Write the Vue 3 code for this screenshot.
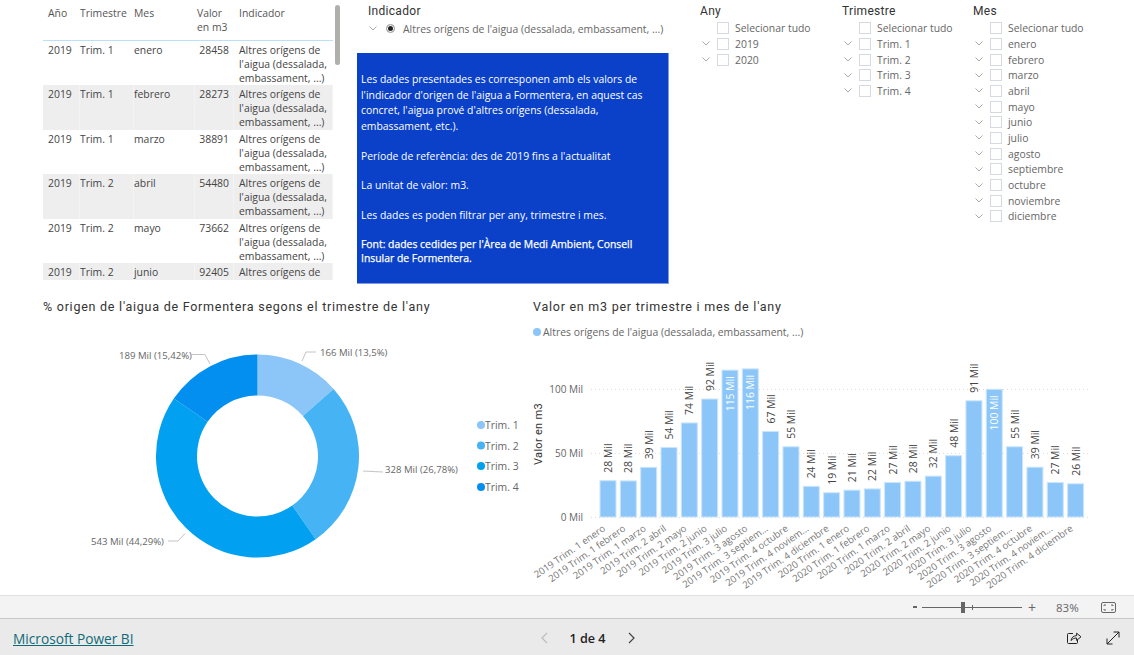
<script setup>
const rowsData = [
  ['2019', 'Trim. 1', 'enero', 28458],
  ['2019', 'Trim. 1', 'febrero', 28273],
  ['2019', 'Trim. 1', 'marzo', 38891],
  ['2019', 'Trim. 2', 'abril', 54480],
  ['2019', 'Trim. 2', 'mayo', 73662],
  ['2019', 'Trim. 2', 'junio', 92405]
]

const slicers = [
  { title: 'Any', cls: 'any', items: ['2019', '2020'] },
  { title: 'Trimestre', cls: 'tri', items: ['Trim. 1', 'Trim. 2', 'Trim. 3', 'Trim. 4'] },
  {
    title: 'Mes',
    cls: 'mes',
    items: ['enero', 'febrero', 'marzo', 'abril', 'mayo', 'junio', 'julio', 'agosto', 'septiembre', 'octubre', 'noviembre', 'diciembre']
  }
]

// donut
const cx = 257.5
const cy = 456
const rOut = 101.5
const rIn = 60.5
const shares = [
  { pct: 13.5, color: '#8cc6f9' },
  { pct: 26.78, color: '#45b3f4' },
  { pct: 44.29, color: '#01a0f0' },
  { pct: 15.43, color: '#038ff0' }
]

function pt(r, a) {
  const rad = ((a - 90) * Math.PI) / 180
  return (cx + r * Math.cos(rad)).toFixed(2) + ' ' + (cy + r * Math.sin(rad)).toFixed(2)
}

let acc = 0
const arcs = shares.map((s) => {
  const a0 = acc
  const a1 = acc + (s.pct / 100) * 360
  acc = a1
  const big = a1 - a0 > 180 ? 1 : 0
  return {
    color: s.color,
    d: `M${pt(rOut, a0)} A${rOut} ${rOut} 0 ${big} 1 ${pt(rOut, a1)} L${pt(rIn, a1)} A${rIn} ${rIn} 0 ${big} 0 ${pt(rIn, a0)} Z`
  }
})

const donutLabels = [
  { text: '166 Mil (13,5%)', x: 320, y: 356, line: '302,361 306,352 316,352' },
  { text: '189 Mil (15,42%)', x: 119, y: 359, line: '192,354.5 205,354.5 210,364' },
  { text: '328 Mil (26,78%)', x: 385, y: 473, line: '363,471 383,472' },
  { text: '543 Mil (44,29%)', x: 91, y: 545, line: '168,541 178,541 185,533.5' }
]

const legend = [
  { text: 'Trim. 1', y: 425, color: '#8cc6f9' },
  { text: 'Trim. 2', y: 445.5, color: '#45b3f4' },
  { text: 'Trim. 3', y: 466, color: '#01a0f0' },
  { text: 'Trim. 4', y: 487, color: '#038ff0' }
]

// bars
const base = 517
const scale = 1.277
const values = [28.46, 28.27, 38.89, 54.48, 73.66, 92.4, 115, 116, 67, 55, 24, 19, 21, 22, 27, 28, 32, 48, 91, 100, 55, 39, 27, 26]
const names = [
  '2019 Trim. 1 enero', '2019 Trim. 1 febrero', '2019 Trim. 1 marzo', '2019 Trim. 2 abril', '2019 Trim. 2 mayo', '2019 Trim. 2 junio',
  '2019 Trim. 3 julio', '2019 Trim. 3 agosto', '2019 Trim. 3 septiem...', '2019 Trim. 4 octubre', '2019 Trim. 4 noviem...', '2019 Trim. 4 diciembre',
  '2020 Trim. 1 enero', '2020 Trim. 1 febrero', '2020 Trim. 1 marzo', '2020 Trim. 2 abril', '2020 Trim. 2 mayo', '2020 Trim. 2 junio',
  '2020 Trim. 3 julio', '2020 Trim. 3 agosto', '2020 Trim. 3 septiem...', '2020 Trim. 4 octubre', '2020 Trim. 4 noviem...', '2020 Trim. 4 diciembre'
]
const bars = values.map((v, i) => {
  const h = v * scale
  const x = 600 + i * 20.33
  const top = base - h
  const inside = v >= 100
  return {
    x,
    top,
    h,
    mid: x + 8,
    label: Math.round(v) + ' Mil',
    inside,
    labelY: inside ? top + 6 : top - 8,
    name: names[i]
  }
})
</script>

<template>
  <div class="page">
    <div class="report">
      <div class="top">
        <div class="table-wrap">
          <div class="table">
            <div class="row head">
              <span>Año</span><span>Trimestre</span><span>Mes</span><span>Valor<br />en m3</span><span>Indicador</span>
            </div>
            <div v-for="(r, i) in rowsData" :key="r[2]" class="row" :class="{ grey: i % 2 === 1, last: i === 5 }">
              <span class="yr">{{ r[0] }}</span>
              <span>{{ r[1] }}</span>
              <span>{{ r[2] }}</span>
              <span class="num">{{ r[3] }}</span>
              <span v-if="i < 5">Altres orígens de l'aigua (dessalada, embassament, ...)</span>
              <span v-else>Altres orígens de</span>
            </div>
          </div>
          <div class="scroll"></div>
        </div>

        <div class="middle">
          <div class="slicer-title ind">Indicador</div>
          <div class="ind-item">
            <svg class="chev" width="8" height="5" viewBox="0 0 8 5"><polyline points="0.5,0.5 4,4 7.5,0.5" /></svg>
            <span class="radio"></span>
            <span>Altres orígens de l'aigua (dessalada, embassament, ...)</span>
          </div>
          <div class="blue">
            <p>Les dades presentades es corresponen amb els valors de l'indicador d'origen de l'aigua a Formentera, en aquest cas concret, l'aigua prové d'altres orígens (dessalada, embassament, etc.).</p>
            <p>Període de referència: des de 2019 fins a l'actualitat</p>
            <p>La unitat de valor: m3.</p>
            <p>Les dades es poden filtrar per any, trimestre i mes.</p>
            <p class="font">Font: dades cedides per l'Àrea de Medi Ambient, Consell Insular de Formentera.</p>
          </div>
        </div>

        <div v-for="s in slicers" :key="s.title" class="slicer" :class="s.cls">
          <div class="slicer-title">{{ s.title }}</div>
          <div class="opt">
            <span class="chev-space"></span><span class="box"></span><span>Selecionar tudo</span>
          </div>
          <div v-for="it in s.items" :key="it" class="opt">
            <svg class="chev" width="8" height="5" viewBox="0 0 8 5"><polyline points="0.5,0.5 4,4 7.5,0.5" /></svg>
            <span class="box"></span><span>{{ it }}</span>
          </div>
        </div>
      </div>

      <div class="bottom">
        <section class="donut">
          <h2>% origen de l'aigua de Formentera segons el trimestre de l'any</h2>
          <svg width="525" height="275" viewBox="0 320 525 275">
            <path v-for="a in arcs" :key="a.color" :d="a.d" :fill="a.color" />
            <g v-for="l in donutLabels" :key="l.text">
              <polyline :points="l.line" fill="none" stroke="#c4c4c4" />
              <text :x="l.x" :y="l.y" class="lbl">{{ l.text }}</text>
            </g>
            <g v-for="l in legend" :key="l.text">
              <circle cx="481" :cy="l.y" r="4" :fill="l.color" />
              <text x="485" :y="l.y + 4" class="leg">{{ l.text }}</text>
            </g>
          </svg>
        </section>
        <section class="bars">
          <h2>Valor en m3 per trimestre i mes de l'any</h2>
          <svg width="609" height="275" viewBox="525 320 609 275">
            <circle cx="537" cy="332" r="4" fill="#8cc6f9" />
            <text x="543" y="336" class="leg">Altres orígens de l'aigua (dessalada, embassament, ...)</text>
            <line x1="591" x2="1089" y1="389.5" y2="389.5" class="grid" />
            <line x1="591" x2="1089" y1="453.5" y2="453.5" class="grid" />
            <line x1="591" x2="1089" y1="517.5" y2="517.5" class="grid" />
            <text x="583" y="393" class="axis" text-anchor="end">100 Mil</text>
            <text x="583" y="457" class="axis" text-anchor="end">50 Mil</text>
            <text x="583" y="521" class="axis" text-anchor="end">0 Mil</text>
            <text class="ytitle" text-anchor="middle" transform="translate(542 434) rotate(-90)">Valor en m3</text>
            <g v-for="b in bars" :key="b.name">
              <rect :x="b.x" :y="b.top" width="16" :height="b.h" fill="#8cc6f9" stroke="#cbe5fc" />
              <text
                :class="b.inside ? 'val in' : 'val'"
                :transform="`translate(${b.mid + 4} ${b.labelY}) rotate(-90)`"
                :text-anchor="b.inside ? 'end' : 'start'"
              >{{ b.label }}</text>
              <text
                class="cat"
                text-anchor="end"
                :transform="`translate(${b.mid - 2} 530) rotate(-35)`"
              >{{ b.name }}</text>
            </g>
          </svg>
        </section>
      </div>
    </div>

    <div class="status">
      <span class="minus"></span>
      <div class="slider"><span class="tick"></span><span class="thumb"></span></div>
      <span class="plus">+</span>
      <span class="pct">83%</span>
      <svg class="fit" width="15" height="11" viewBox="0 0 15 11">
        <rect x="0.5" y="0.5" width="14" height="10" rx="1.5" fill="none" stroke="#666" />
        <path d="M3 4V3h2M10 3h2v1M3 7v1h2M10 8h2V7" fill="none" stroke="#666" />
      </svg>
    </div>

    <div class="foot">
      <a class="brand">Microsoft Power BI</a>
      <div class="pager">
        <svg width="8" height="12" viewBox="0 0 8 12"><polyline points="7,1 2,6 7,11" fill="none" stroke="#bdbdbd" stroke-width="1.2" /></svg>
        <span>1 de 4</span>
        <svg width="8" height="12" viewBox="0 0 8 12"><polyline points="1,1 6,6 1,11" fill="none" stroke="#444" stroke-width="1.2" /></svg>
      </div>
      <div class="actions">
        <svg width="15" height="14" viewBox="0 0 15 14" fill="none" stroke="#222">
          <path d="M6 2.5H1.5a1 1 0 0 0-1 1v8a1 1 0 0 0 1 1h8a1 1 0 0 0 1-1V9" />
          <path d="M4 9.5c.4-3 2.6-4.8 5.6-4.8V2.2l4.4 3.6-4.4 3.6V7c-2.300 0-4 .8-5.600 2.500z" />
        </svg>
        <svg width="14" height="14" viewBox="0 0 14 14" fill="none" stroke="#222">
          <path d="M1 13L13 1M7.500 1H13v5.500M1 7.500V13h5.500" />
        </svg>
      </div>
    </div>
  </div>
</template>

<style>
html, body {
  margin: 0;
  background: #fff;
}
</style>

<style scoped>
.page {
  width: 1134px;
  height: 655px;
  display: flex;
  flex-direction: column;
  overflow: hidden;
  font-family: "Open Sans", "Noto Sans", sans-serif;
  font-size: 10.400px;
  color: #444;
  background: #fff;
}
.report {
  height: 595px;
  display: flex;
  flex-direction: column;
  flex: none;
}
.top {
  height: 295px;
  display: flex;
  flex: none;
}
.table-wrap {
  width: 297px;
  margin-left: 43px;
  margin-right: 17px;
  display: flex;
  flex: none;
  gap: 2px;
}
.table {
  width: 290px;
  height: 280px;
  overflow: hidden;
  flex: none;
}
.row {
  display: grid;
  grid-template-columns: 37px 54px 61px 39px 99px;
  height: 44.500px;
  line-height: 14px;
  color: #444;
}
.row.last {
  height: 16.600px;
}
.row span {
  padding: 2px 4px 0 0;
  box-sizing: border-box;
  border-right: 1px solid transparent;
}
.row > span:nth-child(1) {
  padding-left: 5px;
}
.row.grey {
  background: #eeeeee;
}
.row.grey > span {
  border-right-color: #f4f4f4;
}
.row.head {
  height: 40.900px;
  border-bottom: 1px solid #b9e0f8;
  box-sizing: border-box;
  color: #555;
}
.row.head span {
  padding-top: 6px;
}
.row > span:nth-child(5) {
  padding-left: 5px;
  padding-right: 0;
}
.row.head > span:nth-child(4) {
  padding-left: 2px;
  padding-right: 0;
}
.num {
  text-align: right;
}
.scroll {
  width: 5px;
  height: 60px;
  margin-top: 5px;
  background: #b1afac;
  border-radius: 3px;
}
.middle {
  width: 312px;
  margin-right: 31px;
  flex: none;
}
.slicer-title {
  font-family: Roboto, sans-serif;
  font-size: 12px;
  letter-spacing: 0.3px;
  color: #333;
  height: 20.300px;
  line-height: 22px;
}
.slicer-title.ind {
  padding-left: 11px;
}
.ind-item {
  display: flex;
  align-items: center;
  height: 15px;
  margin-top: 1px;
  padding-left: 12px;
  color: #666;
}
.ind-item .chev {
  margin-right: 9px;
}
.radio {
  width: 9px;
  height: 9px;
  box-sizing: border-box;
  border-radius: 50%;
  border: 1px solid #bbb;
  background: #222;
  box-shadow: inset 0 0 0 1px #fff;
  margin-right: 8px;
}
.chev polyline {
  fill: none;
  stroke: #aaa;
}
.blue {
  height: 231px;
  margin-top: 16.700px;
  box-sizing: border-box;
  background: #0a41c8;
  border-right: 1px solid #7f9ce3;
  border-bottom: 1px solid #7f9ce3;
  padding: 19px 4px 0 4px;
  color: #fff;
  line-height: 15.700px;
}
.blue p {
  margin: 0 0 13.900px;
}
.blue p.font {
  line-height: 14px;
  -webkit-text-stroke: 0.25px #fff;
}
.slicer {
  flex: none;
}
.slicer.any {
  width: 142px;
}
.slicer.tri {
  width: 131px;
}
.opt {
  display: flex;
  align-items: center;
  height: 15.700px;
  color: #666;
  white-space: nowrap;
}
.chev-space {
  width: 8px;
}
.opt .chev, .chev-space {
  margin: 0 7px 0 2px;
  flex: none;
}
.box {
  width: 12px;
  height: 12px;
  box-sizing: border-box;
  border: 1px solid #d5d9e2;
  margin-right: 6px;
  flex: none;
}
.bottom {
  display: flex;
  height: 300px;
}
.bottom h2 {
  margin: 0;
  height: 25px;
  font-family: Roboto, sans-serif;
  font-size: 12.500px;
  font-weight: 400;
  letter-spacing: 0.750px;
  line-height: 24px;
  color: #333;
  white-space: nowrap;
}
.donut {
  width: 525px;
}
.donut h2 {
  padding-left: 43px;
}
.bars {
  width: 609px;
}
.bars h2 {
  padding-left: 8px;
}
svg {
  display: block;
}
.lbl {
  font-size: 9.600px;
  fill: #666;
}
.axis {
  font-size: 10px;
  fill: #666;
}
.leg {
  font-size: 10.400px;
  fill: #666;
}
.grid {
  stroke: #dcdcdc;
  stroke-dasharray: 1 3;
}
.ytitle {
  font-family: Roboto, sans-serif;
  font-size: 11px;
  letter-spacing: 0.3px;
  fill: #333;
}
.val {
  font-size: 10.400px;
  fill: #444;
}
.val.in {
  fill: #fff;
}
.cat {
  font-size: 9.600px;
  fill: #777;
}
.status {
  height: 24px;
  flex: none;
  box-sizing: border-box;
  border-top: 1px solid #e0e0e0;
  border-bottom: 1px solid #c8c8c8;
  background: #f3f3f3;
  display: flex;
  align-items: center;
  padding-left: 913px;
  color: #666;
}
.minus {
  width: 4px;
  height: 2px;
  background: #666;
  margin-right: 5px;
}
.slider {
  position: relative;
  width: 100px;
  height: 1px;
  background: #666;
  margin-right: 6px;
}
.thumb {
  position: absolute;
  left: 39px;
  top: -5px;
  width: 4px;
  height: 11px;
  background: #666;
}
.tick {
  position: absolute;
  left: 50px;
  top: -2px;
  width: 1px;
  height: 5px;
  background: #666;
}
.plus {
  font-size: 14px;
  width: 28px;
}
.pct {
  font-size: 11.500px;
  width: 45px;
}
.foot {
  flex: 1;
  background: #eaeaea;
  display: flex;
  align-items: center;
  padding: 2px 14px 0 13px;
}
.brand {
  font-size: 13.700px;
  color: #0e6b79;
  text-decoration: underline;
}
.pager {
  display: flex;
  align-items: center;
  gap: 22px;
  margin-left: 406px;
  color: #222;
  font-size: 12.600px;
  font-weight: 600;
}
.actions {
  margin-left: auto;
  display: flex;
  gap: 24px;
}
</style>
